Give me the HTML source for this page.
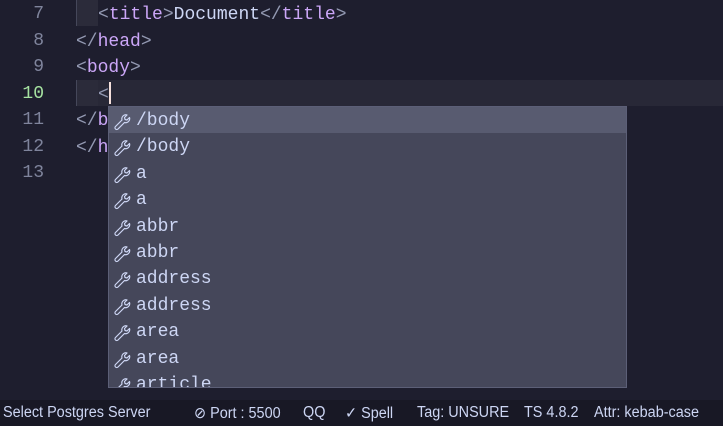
<!DOCTYPE html>
<html><head><meta charset="utf-8"><style>
body{margin:0;width:723px;height:426px;background:#1e1e2e;overflow:hidden;position:relative;font-family:"Liberation Mono",monospace;font-size:18px}
.ln{position:absolute;left:0;width:44px;text-align:right;color:#7f849c;height:26px;line-height:26px}
.code{position:absolute;left:76px;height:26px;line-height:26px;color:#cdd6f4;white-space:pre}
.b{color:#9399b2}.t{color:#cba6f7}
.ind{position:absolute;left:76px;width:21px;height:26px;background:#2b2b3a;border-left:1px solid #45475a}
.cur{position:absolute;left:76px;right:0;top:80px;height:26px;background:#282837}
.pop{position:absolute;left:108px;top:106px;width:517px;height:280px;background:#45475a;border:1px solid #5c5f77;overflow:hidden}
.row{height:26.4px;line-height:28px;color:#cdd6f4;position:relative;padding-left:27px;white-space:pre}
.row.sel{background:#585b70}
.row svg{position:absolute;left:3px;top:4px}
.sb{position:absolute;left:0;top:400px;width:723px;height:26px;background:#181825;color:#cdd6f4;font-family:"Liberation Sans",sans-serif;font-size:15.5px}
.sb span{position:absolute;top:4px;white-space:nowrap;transform:scaleX(0.93);transform-origin:0 0}
</style></head><body>
<div class="cur"></div>
<div class="ln" style="top:1px">7</div>
<div class="ln" style="top:28px">8</div>
<div class="ln" style="top:54px">9</div>
<div class="ln" style="top:81px;color:#a6e3a1">10</div>
<div class="ln" style="top:107px">11</div>
<div class="ln" style="top:134px">12</div>
<div class="ln" style="top:160px">13</div>
<div class="ind" style="top:0"></div>
<div class="ind" style="top:80px"></div>
<div class="code" style="top:2px;left:98px"><span class="b">&lt;</span><span class="t">title</span><span class="b">&gt;</span>Document<span class="b">&lt;/</span><span class="t">title</span><span class="b">&gt;</span></div>
<div class="code" style="top:29px"><span class="b">&lt;/</span><span class="t">head</span><span class="b">&gt;</span></div>
<div class="code" style="top:55px"><span class="b">&lt;</span><span class="t">body</span><span class="b">&gt;</span></div>
<div class="code" style="top:82px;left:98px"><span class="b">&lt;</span></div>
<div style="position:absolute;left:109px;top:82px;width:2px;height:22px;background:#f5e0dc"></div>
<div class="code" style="top:108px"><span class="b">&lt;/</span><span class="t">b</span></div>
<div class="code" style="top:135px"><span class="b">&lt;/</span><span class="t">h</span></div>
<div class="pop">
<svg width="0" height="0" style="position:absolute"><defs><g id="w"><path d="M3.5 15.5 L10 9 A4 4 0 0 1 15 4 L12.5 6.5 L13 8.5 L15 9 L17.5 6.5 A4 4 0 0 1 12.5 11.5 L6 18 A1.4 1.4 0 0 1 3.5 15.5 Z" fill="none" stroke="#cdd6f4" stroke-width="1.2" stroke-linejoin="round"/></g></defs></svg>
<div class="row sel"><svg width="20" height="20"><use href="#w"/></svg>/body</div>
<div class="row"><svg width="20" height="20"><use href="#w"/></svg>/body</div>
<div class="row"><svg width="20" height="20"><use href="#w"/></svg>a</div>
<div class="row"><svg width="20" height="20"><use href="#w"/></svg>a</div>
<div class="row"><svg width="20" height="20"><use href="#w"/></svg>abbr</div>
<div class="row"><svg width="20" height="20"><use href="#w"/></svg>abbr</div>
<div class="row"><svg width="20" height="20"><use href="#w"/></svg>address</div>
<div class="row"><svg width="20" height="20"><use href="#w"/></svg>address</div>
<div class="row"><svg width="20" height="20"><use href="#w"/></svg>area</div>
<div class="row"><svg width="20" height="20"><use href="#w"/></svg>area</div>
<div class="row"><svg width="20" height="20"><use href="#w"/></svg>article</div>
</div>
<div class="sb">
<span style="left:3px">Select Postgres Server</span>
<span style="left:194px">⊘ Port : 5500</span>
<span style="left:303px">QQ</span>
<span style="left:345px">✓ Spell</span>
<span style="left:417px">Tag: UNSURE</span>
<span style="left:524px">TS 4.8.2</span>
<span style="left:594px">Attr: kebab-case</span>
</div>
</body></html>
